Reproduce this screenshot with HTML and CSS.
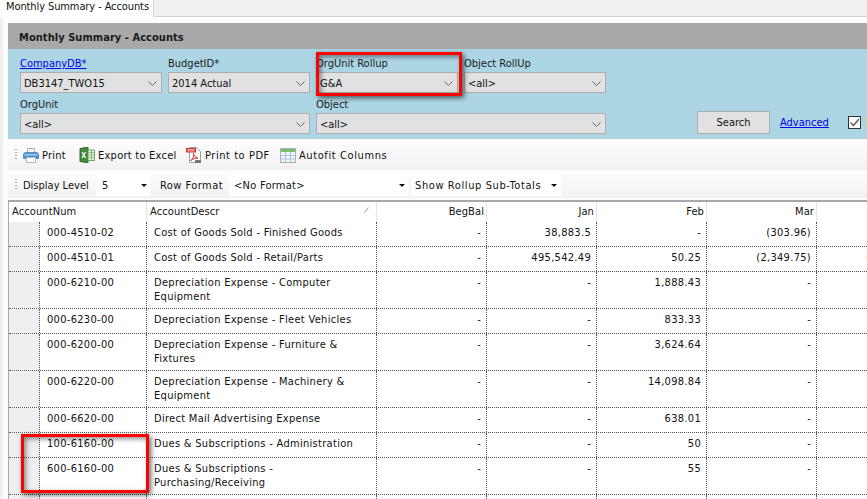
FILE: index.html
```html
<!DOCTYPE html>
<html lang="en">
<head>
<meta charset="utf-8">
<title>Monthly Summary - Accounts</title>
<link rel="stylesheet" href="styles.css">
</head>
<body>
<div class="tabstrip"><div class="tab">Monthly Summary - Accounts</div><div class="tabrest"></div></div>
<div class="shell">
  <main class="panel">
    <h1 class="title">Monthly Summary - Accounts</h1>
    <section class="filters">
      <div class="field"><a class="label link" href="#">CompanyDB*</a><div class="select">DB3147_TWO15<svg class="chev" viewBox="0 0 9 5"><path d="M.5.5l4 4 4-4"/></svg></div></div>
      <div class="field"><span class="label">BudgetID*</span><div class="select">2014 Actual<svg class="chev" viewBox="0 0 9 5"><path d="M.5.5l4 4 4-4"/></svg></div></div>
      <div class="field"><span class="label">OrgUnit Rollup</span><div class="select">G&amp;A<svg class="chev" viewBox="0 0 9 5"><path d="M.5.5l4 4 4-4"/></svg></div></div>
      <div class="field"><span class="label">Object RollUp</span><div class="select">&lt;all&gt;<svg class="chev" viewBox="0 0 9 5"><path d="M.5.5l4 4 4-4"/></svg></div></div>
      <div class="field wide"><span class="label">OrgUnit</span><div class="select">&lt;all&gt;<svg class="chev" viewBox="0 0 9 5"><path d="M.5.5l4 4 4-4"/></svg></div></div>
      <div class="field wide"><span class="label">Object</span><div class="select">&lt;all&gt;<svg class="chev" viewBox="0 0 9 5"><path d="M.5.5l4 4 4-4"/></svg></div></div>
      <div class="actions">
        <button class="search" type="button">Search</button>
        <a class="advanced" href="#">Advanced</a>
        <span class="check"><svg viewBox="0 0 11 11"><path d="M1.500 5.500l3 3 5.500-6.500"/></svg></span>
        <span class="cut"></span>
      </div>
    </section>
    <nav class="toolbar tb1">
      <span class="grip"></span>
      <span class="tool t1"><svg class="ic" viewBox="0 0 16 16"><path d="M4.500 1.500h7v5h-7z" fill="#f4f6f8" stroke="#9fb0c0"/><path d="M.5 7.500c0-1 1-2 2-2h11c1 0 2 1 2 2v4h-15z" fill="#4d92d2" stroke="#5f8bb3"/><path d="M1.500 7h13v1.500h-13z" fill="#a5cdef"/><path d="M3.500 10.500h9v5h-9z" fill="#fff" stroke="#a8b4bf"/></svg><span>Print</span></span>
      <span class="tool t2"><svg class="ic" viewBox="0 0 16 16"><path d="M1 1.500l8-1.300v15.600l-8-1.300z" fill="#3f8a3c" stroke="#2e6a2c"/><path d="M9 3h6.500v10.500H9z" fill="#e8f3e2" stroke="#6ea566"/><path d="M9.500 5.500h6M9.500 8h6M9.500 10.500h6M12.500 3v10" stroke="#8dbb85" fill="none"/><path d="M3 5l3.500 6M6.500 5L3 11" stroke="#fff" stroke-width="1.400" fill="none"/></svg><span>Export to Excel</span></span>
      <span class="tool t3"><svg class="ic" viewBox="0 0 16 16"><path d="M3.500.5h7l4 4v11h-11z" fill="#fff" stroke="#a0a0a0"/><path d="M0 1h10v4.500H0z" fill="#d8322a"/><path d="M1.500 2.500h7M1.500 4h7" stroke="#f3b6b2"/><path d="M4.500 13.500c3-2 3.500-5 3-7 .5 2.500 2 4 4.500 4.500-2.500 0-5 1-7.500 2.500z" fill="none" stroke="#c8332b"/><path d="M9 13h6v3H9z" fill="#777"/></svg><span>Print to PDF</span></span>
      <span class="tool t4"><svg class="ic" viewBox="0 0 16 16"><path d="M.5 1.500h15v14H.5z" fill="#f3f7fb" stroke="#9db1c4"/><path d="M1 2h14v3H1z" fill="#7dbb6c"/><path d="M.5 8.500h15M.5 12h15M5.500 5v10M10.500 5v10" stroke="#a9c6de" fill="none"/></svg><span>Autofit Columns</span></span>
    </nav>
    <nav class="toolbar tb2">
      <span class="grip"></span>
      <span class="tblabel l1">Display Level</span>
      <span class="combo c1">5<i class="tri"></i></span>
      <span class="tblabel l2">Row Format</span>
      <span class="combo c2">&lt;No Format&gt;<i class="tri"></i></span>
      <span class="combo c3">Show Rollup Sub-Totals<i class="tri"></i></span>
    </nav>
    <section class="grid">
      <div class="row head">
        <div class="cell num">AccountNum</div>
        <div class="cell desc">AccountDescr<svg class="sort" viewBox="0 0 5 6"><path d="M.5 5.500l4-5"/></svg></div>
        <div class="cell amt">BegBal</div><div class="cell amt">Jan</div><div class="cell amt">Feb</div><div class="cell amt">Mar</div><div class="cell amt"></div>
      </div>
      <div class="row"><div class="gut"></div><div class="cell acct">000-4510-02</div><div class="cell desc">Cost of Goods Sold - Finished Goods</div><div class="cell amt">-</div><div class="cell amt">38,883.5</div><div class="cell amt">-</div><div class="cell amt">(303.96)</div><div class="cell amt"></div></div>
      <div class="row"><div class="gut"></div><div class="cell acct">000-4510-01</div><div class="cell desc">Cost of Goods Sold - Retail/Parts</div><div class="cell amt">-</div><div class="cell amt">495,542.49</div><div class="cell amt">50.25</div><div class="cell amt">(2,349.75)</div><div class="cell amt">(1,000.00)</div></div>
      <div class="row tall"><div class="gut"></div><div class="cell acct">000-6210-00</div><div class="cell desc">Depreciation Expense - Computer Equipment</div><div class="cell amt">-</div><div class="cell amt">-</div><div class="cell amt">1,888.43</div><div class="cell amt">-</div><div class="cell amt"></div></div>
      <div class="row"><div class="gut"></div><div class="cell acct">000-6230-00</div><div class="cell desc">Depreciation Expense - Fleet Vehicles</div><div class="cell amt">-</div><div class="cell amt">-</div><div class="cell amt">833.33</div><div class="cell amt">-</div><div class="cell amt"></div></div>
      <div class="row tall"><div class="gut"></div><div class="cell acct">000-6200-00</div><div class="cell desc">Depreciation Expense - Furniture &amp; Fixtures</div><div class="cell amt">-</div><div class="cell amt">-</div><div class="cell amt">3,624.64</div><div class="cell amt">-</div><div class="cell amt"></div></div>
      <div class="row tall"><div class="gut"></div><div class="cell acct">000-6220-00</div><div class="cell desc">Depreciation Expense - Machinery &amp; Equipment</div><div class="cell amt">-</div><div class="cell amt">-</div><div class="cell amt">14,098.84</div><div class="cell amt">-</div><div class="cell amt"></div></div>
      <div class="row"><div class="gut"></div><div class="cell acct">000-6620-00</div><div class="cell desc">Direct Mail Advertising Expense</div><div class="cell amt">-</div><div class="cell amt">-</div><div class="cell amt">638.01</div><div class="cell amt">-</div><div class="cell amt"></div></div>
      <div class="row"><div class="gut"></div><div class="cell acct">100-6160-00</div><div class="cell desc">Dues &amp; Subscriptions - Administration</div><div class="cell amt">-</div><div class="cell amt">-</div><div class="cell amt">50</div><div class="cell amt">-</div><div class="cell amt"></div></div>
      <div class="row tall"><div class="gut"></div><div class="cell acct">600-6160-00</div><div class="cell desc">Dues &amp; Subscriptions - Purchasing/Receiving</div><div class="cell amt">-</div><div class="cell amt">-</div><div class="cell amt">55</div><div class="cell amt">-</div><div class="cell amt"></div></div>
      <div class="row"><div class="gut"></div><div class="cell acct"></div><div class="cell desc"></div><div class="cell amt"></div><div class="cell amt"></div><div class="cell amt"></div><div class="cell amt"></div><div class="cell amt"></div></div>
    </section>
  </main>
</div>
<div class="mark m1"></div>
<div class="mark m2"></div>
</body>
</html>
```
FILE: styles.css
```css
* { box-sizing: border-box; }
html, body { margin: 0; padding: 0; width: 867px; height: 499px; overflow: hidden; background: #fff; }
body { position: relative; font-family: "DejaVu Sans Condensed", "DejaVu Sans", sans-serif; font-stretch: condensed; font-size: 11px; color: #111; }
.tabstrip { display: flex; height: 17px; }
.tab { width: 154px; height: 17px; padding: 0 0 0 6px; line-height: 13px; letter-spacing: -.1px; background: #fff; border-right: 1px solid #d4d4d4; white-space: nowrap; }
.tabrest { flex: 1; background: #f0f0f0; border-bottom: 1px solid #d4d4d4; height: 17px; }
.shell { background: #f0f0f0; padding: 0 0 0 3px; height: 482px; }
.panel { background: #fdfdfd; padding: 6px 0 0 5px; height: 482px; overflow: hidden; }
.title { margin: 0; height: 26px; background: #a9a9a9; padding: 2px 0 0 11px; font-size: 11px; font-weight: 700; line-height: 26px; color: #1a1a1a; letter-spacing: .05px; }
.filters { height: 90px; background: #add6e4; padding: 6px 0 0 12px; display: grid; grid-template-columns: 142px 142px 142px 142px 1fr; column-gap: 6px; grid-template-rows: 38px 38px; row-gap: 3px; align-content: start; }
.field { display: flex; flex-direction: column; }
.field.wide { grid-column: span 2; }
.label { height: 17px; line-height: 17px; color: #1a1a1a; white-space: nowrap; }
.link { color: #0000ee; text-decoration: underline; align-self: flex-start; }
.select { height: 21px; background: #e1e1e1; border: 1px solid #adadad; padding: 1px 0 0 3px; line-height: 19px; display: flex; justify-content: space-between; align-items: center; color: #111; }
.chev { width: 9px; height: 5px; margin-right: 4px; fill: none; stroke: #666; stroke-width: 1; }
.actions { grid-column: 5; grid-row: 2; display: flex; align-items: center; padding: 15px 0 0 85px; white-space: nowrap; }
.search { width: 73px; height: 23px; flex: none; background: #e1e1e1; border: 1px solid #adadad; font: inherit; color: #111; padding: 0; }
.advanced { margin-left: 10px; width: 48px; flex: none; color: #0000ee; text-decoration: underline; }
.check { margin-left: 20px; width: 13px; height: 13px; flex: none; border: 1px solid #333; background: #fff; display: flex; }
.check svg { width: 11px; height: 11px; fill: none; stroke: #555; stroke-width: 1.300; }
.cut { margin-left: 5px; width: 2px; height: 11px; flex: none; background: #d8cf8a; }
.toolbar { display: flex; align-items: center; background: linear-gradient(#fefefe, #f1f1f1); }
.tb1 { height: 31px; letter-spacing: .25px; }
.tb2 { height: 27px; margin-top: 1px; }
.grip { width: 2px; height: 12px; margin: 0 6px 0 7px; flex: none; background-image: linear-gradient(#aaa 50%, transparent 50%); background-size: 2px 3px; }
.tool { display: flex; align-items: center; gap: 3px; white-space: nowrap; flex: none; }
.tool span { padding-top: 2px; }
.t1 { width: 56px; }
.t2 { width: 107px; }
.t3 { width: 94px; letter-spacing: .55px; }
.t4 { letter-spacing: .6px; }
.ic { width: 16px; height: 16px; flex: none; stroke-width: 1; }
.tblabel { white-space: nowrap; flex: none; padding-top: 2px; }
.l1 { width: 68px; }
.l2 { width: 64px; margin-left: 9px; letter-spacing: .45px; }
.combo { height: 23px; background: #fff; display: flex; align-items: center; justify-content: space-between; white-space: nowrap; padding: 2px 4px 0 5px; margin-left: 5px; flex: none; }
.c1 { width: 55px; padding-left: 6px; }
.c2 { width: 180px; letter-spacing: .25px; }
.c3 { width: 150px; margin-left: 2px; padding-left: 4px; letter-spacing: .6px; }
.tri { width: 0; height: 0; border: 3px solid transparent; border-top: 3px solid #111; border-bottom: 0; flex: none; }
.grid { margin-top: 2px; border-top: 2px solid #a8a8a8; border-left: 1px solid #a8a8a8; width: 919px; }
.row { display: grid; grid-template-columns: 31px 107px 230px 110px 110px 110px 110px 110px; height: 25px; border-bottom: 1px dotted #555; background: #fff; }
.row.tall { height: 37px; }
.gut { background: #efefef; border-right: 1px dotted #555; }
.cell { padding: 4px 5px 0; line-height: 14px; letter-spacing: .3px; border-right: 1px dotted #555; overflow: hidden; }
.acct { padding-left: 7px; white-space: nowrap; }
.desc { padding-left: 7px; position: relative; }
.amt { text-align: right; padding-right: 5px; white-space: nowrap; }
.head { grid-template-columns: 138px 230px 110px 110px 110px 110px 110px; height: 20px; border-bottom: 0; }
.head .cell { border-right: 1px solid #e4e4e4; padding-top: 3px; letter-spacing: .1px; }
.head .num { padding-left: 3px; }
.head .desc { padding-left: 3px; }
.head .amt { padding-right: 2px; }
.sort { position: absolute; right: 7px; top: 5px; width: 5px; height: 6px; fill: none; stroke: #999; }
.mark { position: absolute; border: 3px solid #f00; box-shadow: 2px 2px 5px rgba(0,0,0,.6), inset 2px 2px 5px rgba(0,0,0,.45); pointer-events: none; }
.m1 { left: 316px; top: 52px; width: 146px; height: 44px; }
.m2 { left: 21px; top: 434px; width: 128px; height: 59px; }
```
